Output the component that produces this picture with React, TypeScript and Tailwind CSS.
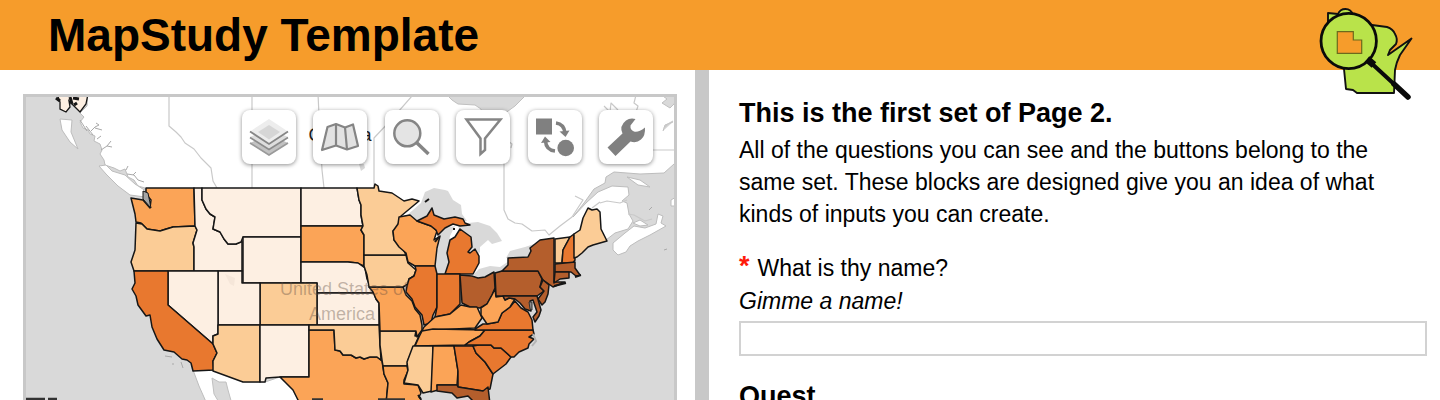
import React from "react";

const FILLS = ["#fdefe2", "#fbcc96", "#fba457", "#e8782f", "#b45e2c"];

type Region = { name: string; level: number; points: string };

const STATES: Region[] = [
  { name: "WA", level: 2, points: "146,188 194,188 195,226 173,227 166,229 160,231 147,229 141,223 136,222 135,214 131,198 143,200 150,208 151,200 146,194" },
  { name: "OR", level: 1, points: "136,223 142,224 147,229 160,231 173,227 195,226 197,230 193,243 194,247 194,271 134,271 131,262 135,250" },
  { name: "ID", level: 0, points: "194,188 202,188 202,200 206,209 210,214 215,217 213,229 220,232 224,239 228,244 236,244 242,241 242,271 194,271 194,247 193,243 197,230 195,226" },
  { name: "MT", level: 0, points: "202,188 301,188 301,237 243,237 241,242 236,244 228,244 224,239 220,232 213,229 215,217 210,214 206,209 202,200" },
  { name: "WY", level: 0, points: "243,237 301,237 301,283 243,283" },
  { name: "ND", level: 0, points: "301,188 357,188 359,200 361,205 361,215 363,226 301,226" },
  { name: "SD", level: 2, points: "301,226 363,226 361,230 364,235 364,266 357,263 348,262 301,262" },
  { name: "NE", level: 0, points: "301,262 348,262 358,263 365,268 367,279 371,288 374,293 317,293 317,283 301,283" },
  { name: "KS", level: 0, points: "317,293 374,293 376,299 379,303 379,325 317,325" },
  { name: "CO", level: 1, points: "260,283 317,283 317,325 260,325" },
  { name: "UT", level: 0, points: "218,271 242,271 242,283 260,283 260,325 218,325" },
  { name: "NV", level: 0, points: "168,271 218,271 218,334 213,336 213,344 168,305" },
  { name: "CA", level: 3, points: "134,271 168,271 168,305 213,344 217,353 213,361 214,370 193,371 191,363 187,360 182,359 174,352 164,350 157,339 152,327 150,315 146,316 138,305 136,296 132,289 135,283" },
  { name: "AZ", level: 1, points: "218,325 260,325 260,382 243,382 213,371 213,361 217,353 213,344 213,336 218,334" },
  { name: "NM", level: 0, points: "260,325 309,325 309,377 280,377 266,378 265,382 260,382" },
  { name: "TX", level: 2, points: "309,330 334,330 335,350 340,351 343,355 351,355 356,358 360,357 364,359 370,357 377,357 382,361 384,374 388,383 386,404 300,404 297,398 293,390 280,377 309,377" },
  { name: "OK", level: 1, points: "309,325 379,325 380,345 381,360 377,357 370,357 364,359 360,357 356,358 351,355 343,355 340,351 335,350 334,330 309,330" },
  { name: "AR", level: 1, points: "380,331 416,331 415,336 419,336 414,347 408,360 407,366 383,366 382,360 380,345" },
  { name: "LA", level: 2, points: "383,366 407,366 408,371 404,380 404,384 418,385 421,393 419,397 424,404 386,404 388,383 384,374" },
  { name: "MO", level: 2, points: "369,287 403,287 406,295 412,301 415,309 420,315 422,325 422,330 417,337 416,331 380,331 379,303 376,299 373,292" },
  { name: "IA", level: 1, points: "364,255 406,255 408,263 416,270 414,276 409,279 408,284 403,287 369,287 367,275 364,266" },
  { name: "MN", level: 1, points: "357,188 374,188 375,184 378,186 379,191 392,193 404,201 412,199 419,201 401,216 399,222 397,228 393,231 394,240 402,247 406,255 364,255 364,235 361,230 363,226 361,215 361,205 359,200" },
  { name: "WI", level: 2, points: "399,217 410,215 417,221 431,226 437,231 434,240 440,236 437,248 435,266 415,266 408,262 406,253 399,247 394,240 393,231 398,224" },
  { name: "MI-U", level: 3, points: "417,221 427,216 432,208 434,215 444,219 455,217 463,219 465,223 470,225 460,226 453,224 445,228 438,235 436,230 431,226" },
  { name: "MI", level: 3, points: "460,229 471,237 472,247 468,252 470,253 475,249 479,256 479,263 473,274 445,274 449,262 447,253 450,240 455,237" },
  { name: "IL", level: 3, points: "415,266 435,266 437,274 437,307 433,315 431,323 424,325 422,315 415,307 412,299 406,292 407,286 409,279 414,276 416,270" },
  { name: "IN", level: 3, points: "437,274 460,274 460,304 455,309 450,314 435,317 437,307" },
  { name: "OH", level: 4, points: "460,275 472,276 478,278 485,277 494,272 495,288 492,295 487,304 480,308 470,307 462,303" },
  { name: "KY", level: 2, points: "424,327 435,317 450,314 461,305 470,307 477,307 482,318 475,328 433,330 432,331 422,331" },
  { name: "TN", level: 2, points: "422,331 433,329 485,330 480,336 469,342 465,345 415,346 419,337" },
  { name: "MS", level: 1, points: "413,346 433,346 432,391 423,393 418,385 404,383 408,370 407,362" },
  { name: "AL", level: 2, points: "433,346 454,346 458,371 457,385 437,385 438,390 431,392" },
  { name: "GA", level: 3, points: "454,346 473,346 476,353 485,362 493,374 490,389 483,391 458,387 458,371" },
  { name: "SC", level: 3, points: "473,346 479,345 491,345 494,348 501,348 511,357 506,364 493,374 485,362 476,353" },
  { name: "NC", level: 3, points: "485,330 533,330 534,334 529,337 534,339 529,344 528,348 519,352 514,357 511,357 501,348 494,348 491,345 465,345 469,342 480,336" },
  { name: "VA", level: 3, points: "475,329 483,324 487,324 498,322 502,313 510,307 515,301 521,308 528,312 532,320 533,330 475,330" },
  { name: "WV", level: 2, points: "495,289 496,297 503,296 505,300 509,298 515,299 510,307 502,313 498,322 487,324 481,315 481,308 487,304 492,295" },
  { name: "PA", level: 4, points: "495,273 502,271 538,271 542,279 540,287 544,291 537,296 496,296" },
  { name: "NY", level: 4, points: "502,271 508,265 508,258 528,257 531,251 530,248 540,240 554,238 554,282 565,282 553,287 543,280 538,271" },
  { name: "VT", level: 1, points: "555,239 570,237 563,250 562,263 555,263" },
  { name: "NH", level: 3, points: "570,237 574,234 575,260 573,263 562,263 563,250" },
  { name: "ME", level: 1, points: "574,258 574,234 580,230 583,218 588,208 592,210 597,209 600,212 601,229 607,241 600,243 593,245 588,247 582,253 577,257" },
  { name: "MA", level: 4, points: "555,264 575,262 575,268 580,275 576,276 571,272 555,272" },
  { name: "CT", level: 4, points: "555,272 569,272 569,278 560,279 554,283" },
  { name: "NJ", level: 4, points: "543,280 549,285 548,294 545,302 542,305 538,299 544,291 540,287" },
  { name: "MD", level: 4, points: "503,296 537,296 541,310 539,316 535,322 533,317 537,312 533,300 530,301 531,311 525,309 520,303 515,299 509,298 505,300" },
  { name: "FL", level: 4, points: "437,385 457,385 458,387 483,391 488,387 490,404 474,402 468,396 457,398 452,393 437,391" },
];

const LAKES = [
  "405,217 421,203 425,192 434,188 445,190 448,191 453,200 461,205 462,214 467,221 440,224 420,222",
  "458,224 478,222 490,226 497,233 502,241 492,244 488,240 480,247 480,252 474,262 466,255 460,236",
  "473,275 479,269 490,266 500,267 509,261 511,267 500,273 485,280",
  "506,258 510,251 525,247 534,244 532,256",
  "437,236 445,228 455,226 450,236 448,250 450,262 444,275 436,273 436,255 440,240",
  "359,164 364,164 365,168 361,171",
];

function StudyMap() {
  return (
    <svg
      className="block h-full w-full"
      viewBox="26 97 648 303"
      preserveAspectRatio="xMidYMin slice"
      role="img"
      aria-label="Choropleth map of the United States"
    >
      <rect x="0" y="90" width="700" height="600" fill="#d9d9d9" />
      <g fill="#ffffff" stroke="#bdbdbd" strokeWidth="1" strokeLinejoin="round">
        <path d="M88 90L87 106L80 113L84 117L80 122L83 128L88 130L90 134L95 136L94 141L100 144L102 150L100 154L104 160L105 165L114 168L120 171L125 169L128 177L134 180L138 186L145 188L150 215L300 260L500 285L556 262L580 230L606 240L615 233L628 229L633 221L629 214L627 203L622 201L629 195L628 187L612 186L598 192L586 203L573 217L584 203L594 189L605 183L606 177L614 172L640 174L664 173L674 164L690 150L690 90Z" />
        <path d="M60 119L72 120L71 132L78 149L70 142L62 130Z" />
        <path d="M99 166L106 165L112 171L125 175L135 184L146 191L145 197L130 195L118 186L106 174Z" />
        <path d="M613 243L625 233L634 226L645 228L656 224L658 214L663 216L661 223L666 226L650 235L638 241L630 246L626 252L618 255L613 250Z" />
        <path d="M627 177L640 180L650 187L638 185Z" />
        <path d="M633 223L640 220L648 225L640 226Z" />
        <path d="M676 197L671 200L671 206L676 206Z" />
        <path d="M193 370L214 370L243 382L265 382L280 377L293 390L300 404L207 404L199 386Z" />
      </g>
      <g fill="#d9d9d9" stroke="#c0c0c0" strokeWidth="1" strokeLinejoin="round">
        <path d="M446 94L452 100L458 104L475 105L481 109L482 114L504 114L515 106L526 95Z" />
        <path d="M660 94L667 99L662 103L670 108L674 104L680 94Z" />
        <path d="M212 378L219 382L226 382L228 390L232 404L220 404L214 394Z" />
        <path d="M663 131L665 125L673 122" />
      </g>
      <g fill="#d9d9d9">
        {LAKES.map((lake) => (
          <polygon key={lake} points={lake} />
        ))}
      </g>
      <g fill="none" stroke="#c9c9c9" strokeWidth="1.2" strokeLinejoin="round">
        <path d="M169 94V126L176 132L181 137L185 143L194 149L201 158L211 168L213 181L217 188" />
        <path d="M252 94V188" />
        <path d="M318 94L319 115L322 170L324 188" />
        <path d="M412 96L391 120L374 138V186" />
        <path d="M504 160V210L508 219L515 223L522 224L532 231L545 230L549 235L560 226L572 217L583 200L575 196" />
        <path d="M503 140L508 141L512 144L511 148" />
        <path d="M640 150H674" />
        <path d="M604 106L610 112L611 103L618 110M636 95L634 103L638 106L636 112M664 128L668 124L673 121" />
        <path d="M600 203L607 201L620 203L627 200M592 208L600 202M628 214L634 215L645 221L652 219" />
      </g>
      <g fill="none" stroke="#a9a9a9" strokeWidth="1" strokeLinejoin="round">
        <path d="M91 131L95 127L99 125L96 123M95 128L102 130M97 139L101 136M101 150L107 146L111 141M107 146L112 147M126 170L128 166M127 174L134 175L138 180L144 182M133 175L136 172" />
        <path d="M80 120L87 131M86 126L93 135" />
        <path d="M165 356L172 357M172 364L174 364M181 362L183 368" />
        <path d="M649 210L652 207M664 250L667 249" />
      </g>
      <text x="340" y="141" textAnchor="middle" fontSize="18" fill="#1c1c1c" fontFamily="Liberation Sans, Arial, sans-serif">
        Canada
      </text>
      <path d="M57 94L60 102L60 109L66 112L70 107L69 101L74 106L80 112L86 104L88 94Z" fill="#fdefe2" stroke="#161616" strokeWidth="1.300" />
      <path d="M56 98L60 101M70 97L72 104M73 98L79 99M74 105L77 103" stroke="#161616" strokeWidth="3" fill="none" />
      <g stroke="#161616" strokeWidth="1.5" strokeLinejoin="round">
        {STATES.map((s) => (
          <polygon key={s.name} points={s.points} fill={FILLS[s.level]} />
        ))}
      </g>
      <path d="M143 191L148 193L151 208L143 199Z" fill="#a5a5a5" stroke="#161616" strokeWidth="1" />
      <path d="M529 302L532 302L532 310L530 309Z" fill="#8a8a8a" stroke="#333333" strokeWidth="1" />
      <path d="M425 202L429 199M435 242L439 237M554 286L566 283M575 277L581 275M453 229H455M418 395L421 399" stroke="#161616" strokeWidth="2" fill="none" />
      <path d="M533 334L536 341L532 346" stroke="#b5b5b5" strokeWidth="2" fill="none" />
      <path d="M225 274L235 278L234 286L230 284Z" fill="#f5e6d9" />
      <g fontSize="18" fill="#5c4a3f" fillOpacity="0.38" textAnchor="middle" fontFamily="Liberation Sans, Arial, sans-serif">
        <text x="344" y="295">United States of</text>
        <text x="342" y="320">America</text>
      </g>
      <path d="M26 399H45M48 399H57M312 399.500H323M378 399.500H405" stroke="#333333" strokeWidth="2.500" fill="none" />
    </svg>
  );
}

const LayersIcon = () => (
  <g>
    <path d="M8 33L27 45.500L46 33L27 24Z" fill="#c2c2c2" />
    <path d="M8 33L27 45L46 33" fill="none" stroke="#9a9a9a" strokeWidth="1.600" />
    <path d="M8 27L27 39.500L46 27L27 18Z" fill="#dedede" />
    <path d="M8 27.500L27 39.500L46 27.500" fill="none" stroke="#8c8c8c" strokeWidth="1.600" />
    <path d="M27 9L46 21.500L27 34L8 21.500Z" fill="#ededed" />
    <path d="M27 15L38 22L27 29.500L16 22Z" fill="#d6d6d6" />
    <path d="M8 21.500L27 34L46 21.500" fill="none" stroke="#868686" strokeWidth="1.800" />
  </g>
);

const FoldedMapIcon = () => (
  <g fill="#e2e2e2" stroke="#858585" strokeWidth="2.200" strokeLinejoin="round">
    <path d="M9 40L14.500 17L23 14L32 17.500L40 14.500L45 36L34 39.500L23 35.500Z" />
    <path d="M23 14V35.500M32 17.500L34 39.500" fill="none" />
  </g>
);

const SearchIcon = () => (
  <g stroke="#858585">
    <circle cx="22.300" cy="23.300" r="13" fill="#e4e4e4" strokeWidth="2.500" />
    <path d="M31.500 32.500L43.500 44" strokeWidth="3.500" fill="none" />
  </g>
);

const FilterIcon = () => (
  <path
    d="M10.500 9.500H44.500L29 28.500V40L24.500 44V28.500Z"
    fill="#ffffff"
    stroke="#858585"
    strokeWidth="2.500"
  />
);

const ReexpressIcon = () => (
  <g fill="#808080">
    <rect x="8" y="8.500" width="16" height="16" />
    <circle cx="37.700" cy="38" r="8.300" />
    <path d="M28 13Q36 14 37 23" fill="none" stroke="#808080" strokeWidth="3.600" />
    <path d="M31.500 21.500L41.500 20.500L37.500 27Z" />
    <path d="M27 41Q18 40 17.500 31" fill="none" stroke="#808080" strokeWidth="3.600" />
    <path d="M13 33L22.500 32L17 26.500Z" />
  </g>
);

const WrenchIcon = () => (
  <path
    d="M8.500 37.500L23.500 23.500Q20 16 27 10.500Q31 7.500 36.500 9L31.500 15.500Q31 20 35 21.500Q39 23 46 17.500Q46.500 26 42 29.500Q37.500 33.500 31.500 31.500L16.500 46Z"
    fill="#808080"
  />
);

const TOOLS = [
  { label: "Overlays", Icon: LayersIcon },
  { label: "Basemap", Icon: FoldedMapIcon },
  { label: "Search", Icon: SearchIcon },
  { label: "Filter", Icon: FilterIcon },
  { label: "Reexpress", Icon: ReexpressIcon },
  { label: "Tools", Icon: WrenchIcon },
];

function Logo() {
  return (
    <svg className="mt-1 h-[100px] w-[100px] shrink-0" viewBox="25 4 100 100" role="img" aria-label="MapStudy logo">
      <path
        d="M38 13L48 14Q50 9 55.500 9Q61 9 63 15L66 24L82 25L97 27Q103 29 105 34Q108 39 106 44L100 50L98 55L121.500 38.500L110 55Q106 63 105 70L104 93H67L63 90L56 89L53.500 64L38 26Z"
        fill="#b9e34a"
        stroke="#111111"
        strokeWidth="1.900"
        strokeLinejoin="round"
      />
      <circle cx="58.700" cy="41" r="27.700" fill="#b9e34a" stroke="#0a0a0a" strokeWidth="2.800" />
      <path d="M47.300 31.700H63.300V40H71.700V53.300H47.300Z" fill="#f69c2b" stroke="#6b6a1c" strokeWidth="1.200" />
      <path d="M77 59L84 65" stroke="#0a0a0a" strokeWidth="7" />
      <path d="M79 61L118 97" stroke="#0a0a0a" strokeWidth="4" strokeLinecap="round" />
      <path d="M104 84L118 97" stroke="#0a0a0a" strokeWidth="5.500" strokeLinecap="round" />
    </svg>
  );
}

export default function App() {
  return (
    <div className="flex h-screen flex-col overflow-hidden bg-white font-['Liberation_Sans',Arial,sans-serif] text-black">
      <header className="relative z-10 flex h-[70px] shrink-0 items-start justify-between bg-[#f69c2b] pr-[25px] pl-12">
        <h1 className="text-[46px] leading-[70px] font-bold">MapStudy Template</h1>
        <Logo />
      </header>

      <main className="grid min-h-0 flex-1 grid-cols-[695fr_14px_731fr]">
        <section className="flex min-h-0 min-w-0 flex-col pt-[24px] pr-[18px] pl-[23px]" aria-label="Map">
          <div className="relative min-h-0 flex-1 overflow-hidden border-3 border-b-0 border-[#c8c8c8]">
            <StudyMap />
            <div className="absolute top-[13px] right-[21px] flex w-[411px] justify-between">
              {TOOLS.map(({ label, Icon }) => (
                <button
                  key={label}
                  type="button"
                  aria-label={label}
                  className="h-[54px] w-[54px] rounded-lg bg-white shadow-[0_1px_4px_rgba(0,0,0,0.45)]"
                >
                  <svg className="block h-[54px] w-[54px]" viewBox="0 0 54 54" aria-hidden="true">
                    <Icon />
                  </svg>
                </button>
              ))}
            </div>
          </div>
        </section>

        <div className="bg-[#c8c8c8]" />

        <section className="min-h-0 min-w-0 overflow-hidden pt-[27px] pr-[13px] pl-[30px] text-[23px] leading-8">
          <h2 className="text-[27px] font-bold">This is the first set of Page 2.</h2>
          <p className="mt-[5px] max-w-[660px]">
            All of the questions you can see and the buttons belong to the same set. These blocks are designed give you
            an idea of what kinds of inputs you can create.
          </p>
          <label htmlFor="name" className="mt-[22px] flex items-start gap-2">
            <span className="text-[27px] leading-7 font-bold text-[#ff1a0a]">*</span>
            <span>What is thy name?</span>
          </label>
          <p id="name-hint" className="mt-px italic">
            Gimme a name!
          </p>
          <input
            id="name"
            type="text"
            aria-describedby="name-hint"
            className="mt-1 block h-[35px] w-full border-2 border-[#d2d2d2] bg-white px-2"
          />
          <h2 className="mt-6 text-[27px] font-bold">Quest</h2>
        </section>
      </main>
    </div>
  );
}
